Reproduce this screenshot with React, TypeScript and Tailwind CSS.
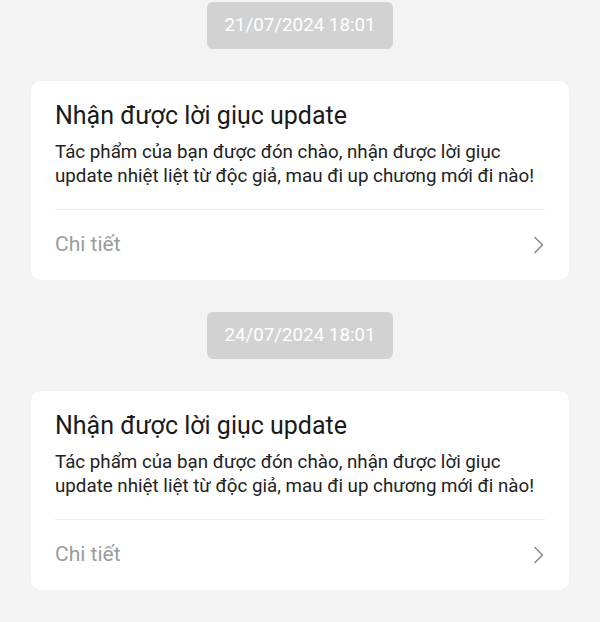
const items = [
  { date: '21/07/2024 18:01' },
  { date: '24/07/2024 18:01' },
];

function Chevron() {
  return (
    <svg width="12" height="18" viewBox="0 0 12 18" fill="none" className="shrink-0">
      <path d="M2 1.5 L9.5 9 L2 16.5" stroke="#8a8a8a" strokeWidth="1.6" strokeLinecap="round" strokeLinejoin="round" />
    </svg>
  );
}

function Notice({ date }: { date: string }) {
  return (
    <div className="flex flex-col items-center">
      <div className="flex h-[47px] w-[186px] items-center justify-center rounded-[6px] bg-[#d2d2d2] text-[18.75px] text-white">
        {date}
      </div>
      <div className="mt-[32px] w-[538px] rounded-[10px] bg-white px-[24px] pt-[19px] pb-[3px]">
        <div className="text-[25px] leading-[32px] text-[#1a1a1a]">Nhận được lời giục update</div>
        <p className="mt-[8px] text-[18.75px] leading-[24px] text-[#222222]">
          Tác phẩm của bạn được đón chào, nhận được lời giục update nhiệt liệt từ độc giả, mau đi up chương mới đi nào!
        </p>
        <div className="mt-[21px] h-px bg-[#ededed]" />
        <div className="flex h-[67px] items-center justify-between pt-[2px]">
          <span className="text-[21px] text-[#9c9c9c]">Chi tiết</span>
          <Chevron />
        </div>
      </div>
    </div>
  );
}

export default function App() {
  return (
    <div className="min-h-[622px] bg-[#f3f3f3] pt-[2px] font-['Roboto',sans-serif]">
      <div className="flex flex-col gap-[32px]">
        {items.map((it) => (
          <Notice key={it.date} date={it.date} />
        ))}
      </div>
    </div>
  );
}
